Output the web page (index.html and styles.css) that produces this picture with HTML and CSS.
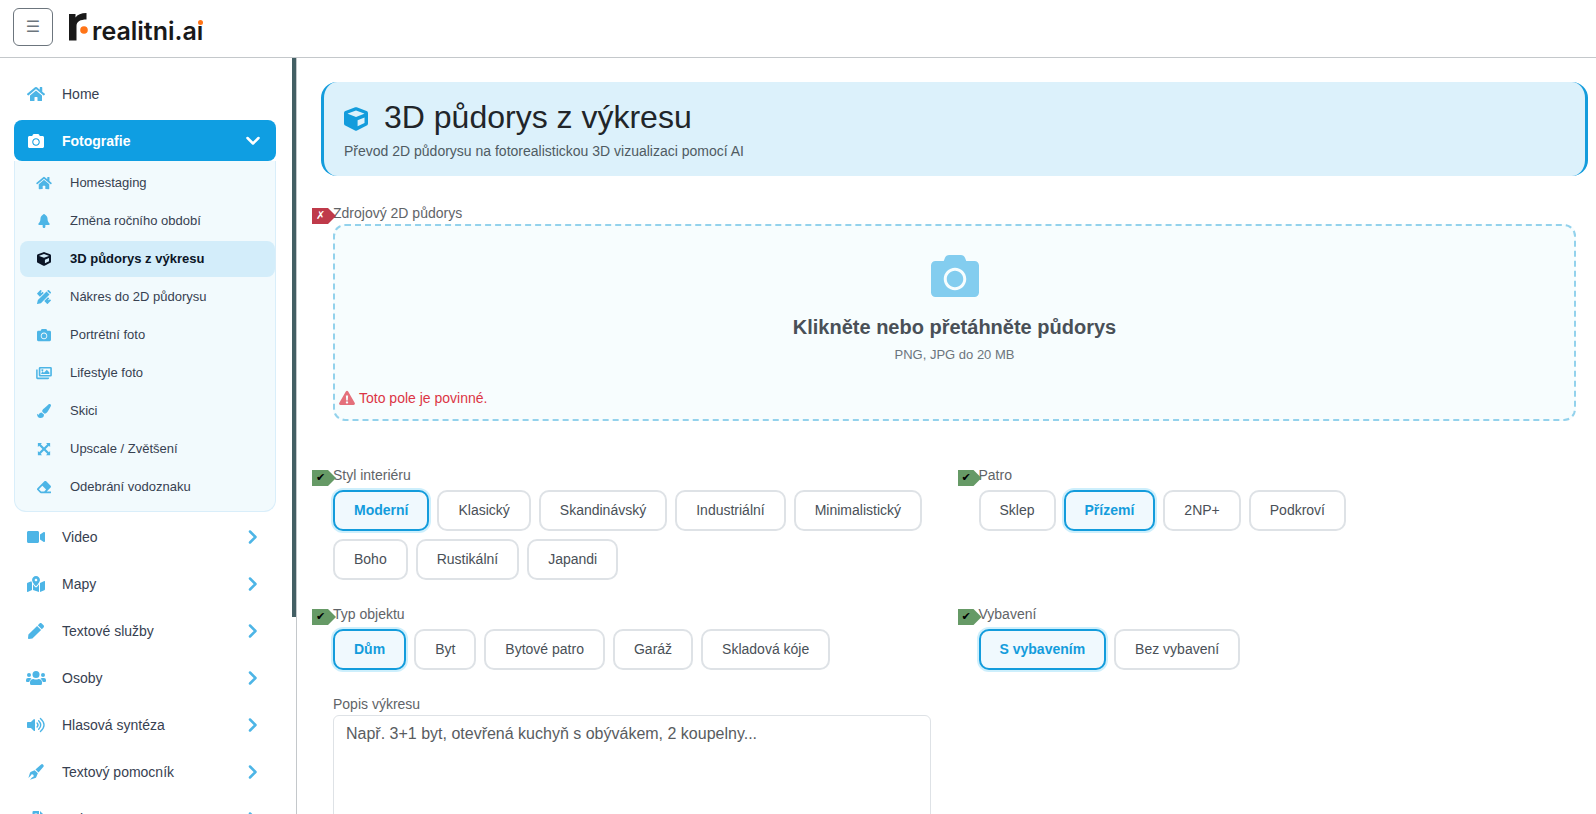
FILE: index.html
```html
<!DOCTYPE html>
<html lang="cs">
<head>
<meta charset="utf-8">
<meta name="viewport" content="width=device-width, initial-scale=1">
<title>3D půdorys z výkresu – realitni.ai</title>
<link rel="stylesheet" href="styles.css">
</head>
<body>
<svg class="sprite" aria-hidden="true">
  <symbol id="home" viewBox="0 0 576 512"><path d="M280.37 148.26L96 300.11V464a16 16 0 0 0 16 16l112.06-.29a16 16 0 0 0 15.92-16V368a16 16 0 0 1 16-16h64a16 16 0 0 1 16 16v95.64a16 16 0 0 0 16 16.05L464 480a16 16 0 0 0 16-16V300L295.67 148.26a12.19 12.19 0 0 0-15.3 0zM571.6 251.47L488 182.56V44.05a12 12 0 0 0-12-12h-56a12 12 0 0 0-12 12v72.61L318.47 43a48 48 0 0 0-61 0L4.34 251.47a12 12 0 0 0-1.6 16.9l25.5 31A12 12 0 0 0 45.15 301l235.22-193.74a12.19 12.19 0 0 1 15.3 0L530.9 301a12 12 0 0 0 16.9-1.6l25.5-31a12 12 0 0 0-1.7-16.93z"/></symbol>
  <symbol id="camera" viewBox="0 0 512 512"><path d="M512 144v288c0 26.500-21.500 48-48 48H48c-26.500 0-48-21.500-48-48V144c0-26.500 21.500-48 48-48h88l12.300-32.900c7-18.700 24.900-31.100 44.900-31.100h125.500c20 0 37.900 12.400 44.900 31.100L376 96h88c26.500 0 48 21.500 48 48zM376 288c0-66.200-53.800-120-120-120s-120 53.800-120 120 53.800 120 120 120 120-53.800 120-120zm-32 0c0 48.500-39.500 88-88 88s-88-39.500-88-88 39.500-88 88-88 88 39.500 88 88z"/></symbol>
  <symbol id="tree" viewBox="0 0 512 512"><path d="M256 0c18 0 28 8 42 24 50 34 76 74 84 120 8 54 4 90 24 130 10 26 28 50 50 76 16 22 4 50-22 50H306v64c0 60-100 60-100 0v-64H78c-26 0-38-28-22-50 22-26 40-50 50-76 20-40 16-76 24-130 8-46 34-86 84-120 14-16 24-24 42-24z"/></symbol>
  <symbol id="cube" viewBox="0 0 512 512"><path fill-rule="evenodd" d="M239.100 6.300l-208 78c-18.700 7-31.100 25-31.100 45v225.100c0 18.200 10.300 34.800 26.500 42.900l208 104c13.500 6.800 29.400 6.800 42.900 0l208-104c16.300-8.100 26.500-24.800 26.500-42.900V129.300c0-20-12.400-37.900-31.100-44.900l-208-78C262 2.200 250 2.200 239.100 6.300zM256 74l176 66v2l-176 70-176-70v-2zM290 410V282l148-60v120z"/></symbol>
  <symbol id="design" viewBox="0 0 512 512"><path d="M10 116 116 10q16-16 32 0l30 30-44 44 24 24 44-44 44 44-138 138L10 148q-16-16 0-32zM266 404l138-138 44 44-44 44 24 24 44-44 30 30q16 16 0 32L396 502q-16 16-32 0zM348 54l110 110L142 480 12 510q-14 2-10-12l30-130zM372 32l22-22q24-20 46 0l62 62q20 22 0 46l-22 22z"/></symbol>
  <symbol id="images" viewBox="0 0 576 512"><path fill-rule="evenodd" d="M144 32h384q48 0 48 48v256q0 48-48 48H144q-48 0-48-48V80q0-48 48-48zm12 56v240h360V88zM188 296v-44l52-52 46 46 104-106 96 96v60zM228 116a36 36 0 1 0 .1 0z"/><path d="M0 128h56v296h424v8q0 48-48 48H48q-48 0-48-48z"/></symbol>
  <symbol id="brush" viewBox="0 0 512 512"><path d="M167.020 309.340c-40.120 2.580-76.530 17.860-97.190 72.300-2.350 6.210-8 9.980-14.590 9.980-11.110 0-45.460-27.670-55.250-34.350C0 439.620 37.930 512 128 512c75.860 0 128-43.770 128-120.190 0-3.110-.65-6.080-.97-9.130l-88.010-73.340zM457.890 0c-15.160 0-29.370 6.710-40.210 16.450C213.270 199.050 192 203.340 192 257.090c0 13.700 3.250 26.760 8.730 38.700l63.820 53.180c7.210 1.800 14.640 3.030 22.390 3.030 62.110 0 98.110-45.470 211.160-256.460 7.380-14.350 13.900-29.850 13.900-45.990C512 20.640 486 0 457.890 0z"/></symbol>
  <symbol id="expand" viewBox="0 0 512 512"><path d="M32 32h150l-46 46 120 120L376 78l-46-46h150v150l-46-46-120 120 120 120 46-46v150H330l46-46-120-120-120 120 46 46H32V330l46 46 120-120L78 136l-46 46z"/></symbol>
  <symbol id="eraser" viewBox="0 0 512 512"><path d="M497.941 273.941c18.745-18.745 18.745-49.137 0-67.882l-160-160c-18.745-18.745-49.136-18.746-67.883 0l-256 256c-18.745 18.745-18.745 49.137 0 67.882l96 96A48.004 48.004 0 0 0 144 480h356c6.627 0 12-5.373 12-12v-40c0-6.627-5.373-12-12-12H355.883l142.058-142.059zm-302.627-62.627l137.373 137.373L265.373 416H150.628l-80-80 124.686-124.686z"/></symbol>
  <symbol id="video" viewBox="0 0 576 512"><path d="M336.200 64H47.800C21.400 64 0 85.400 0 111.800v288.400C0 426.600 21.400 448 47.800 448h288.400c26.400 0 47.800-21.400 47.800-47.800V111.800c0-26.400-21.400-47.800-47.800-47.800zm189.400 37.700L416 177.300v157.400l109.600 75.500c21.200 14.600 50.400-.3 50.400-25.800V127.500c0-25.400-29.100-40.400-50.400-25.800z"/></symbol>
  <symbol id="map" viewBox="0 0 576 512"><path d="M288 0c-69.590 0-126 56.410-126 126 0 56.260 82.350 158.800 113.900 196.020 6.390 7.540 17.820 7.540 24.200 0C331.650 284.800 414 182.260 414 126 414 56.410 357.590 0 288 0zm0 168c-23.200 0-42-18.800-42-42s18.800-42 42-42 42 18.800 42 42-18.800 42-42 42zM20.120 215.950A32.006 32.006 0 0 0 0 245.660v250.320c0 11.320 11.430 19.060 21.940 14.860L160 448V214.920c-8.840-15.980-16.070-31.540-21.250-46.420L20.120 215.950zM288 359.670c-14.070 0-27.380-6.180-36.510-16.960-19.660-23.200-40.570-49.620-59.490-76.720v182l192 64V266c-18.920 27.090-39.820 53.520-59.490 76.720-9.130 10.770-22.440 16.950-36.510 16.950zm266.060-198.510L416 224v288l139.880-55.950A31.996 31.996 0 0 0 576 426.340V176.020c0-11.320-11.430-19.060-21.940-14.860z"/></symbol>
  <symbol id="pen" viewBox="0 0 512 512"><path d="M290.740 93.240l128.020 128.020-277.990 277.990-114.140 12.600C11.350 513.540-1.560 500.620.14 485.340l12.700-114.220 277.900-277.880zm207.200-19.060l-60.110-60.110c-18.750-18.750-49.160-18.750-67.910 0l-56.550 56.550 128.020 128.020 56.550-56.550c18.750-18.760 18.750-49.160 0-67.910z"/></symbol>
  <symbol id="users" viewBox="0 0 640 512"><circle cx="96" cy="160" r="64"/><circle cx="544" cy="160" r="64"/><circle cx="320" cy="144" r="112"/><path d="M64 256h64q28 0 46 20-62 36-72 108H32q-32 0-32-32v-32q0-64 64-64zM512 256h64q64 0 64 64v32q0 32-32 32h-70q-10-72-72-108 18-20 46-20zM243 288q77 36 154 0 115 6 115 115v29q0 48-48 48H176q-48 0-48-48v-29q0-109 115-115z"/></symbol>
  <symbol id="volume" viewBox="0 0 576 512"><path d="M215 71 126 160H24q-24 0-24 24v144q0 24 24 24h102l89 89q16 14 41-1V88q-20-32-41-17z"/><path fill="none" stroke="currentColor" stroke-width="44" stroke-linecap="round" d="M322 190q62 66 0 132M374 118q130 138 0 276M430 48q230 208 0 416"/></symbol>
  <symbol id="nib" viewBox="0 0 512 512"><path d="M420 14q32-26 66 6 34 36 8 68L336 274l-98-98zM214 196l102 102-50 118q-10 24-36 32L62 500l72-74a48 48 0 1 0-48-48L12 450 64 282q8-26 32-36z"/></symbol>
  <symbol id="doc" viewBox="0 0 448 512"><path d="M144 0h176v128h128v256q0 32-32 32H144q-32 0-32-32V32q0-32 32-32zm36 80v210h200V190H260V80zM0 96h64v352h272v32q0 32-32 32H32q-32 0-32-32zM352 0l96 96h-96z" fill-rule="evenodd"/></symbol>
  <symbol id="warn" viewBox="0 0 576 512"><path fill-rule="evenodd" d="M246 24q42-50 84 0l238 416q22 56-42 72H50q-64-16-42-72zM248 164l12 186h56l12-186zM288 370a42 42 0 1 0 .1 0z"/></symbol>
  <symbol id="chevron" viewBox="0 0 14 14"><path fill="none" stroke="currentColor" stroke-width="2.500" stroke-linecap="round" stroke-linejoin="round" d="M4 1.500 9.500 7 4 12.500"/></symbol>
</svg>

<header class="topbar">
  <button class="menu-button" type="button" aria-label="Menu">☰</button>
  <a class="logo" href="#" aria-label="realitni.ai">
    <svg class="logo-mark" viewBox="0 0 19 28" aria-hidden="true"><path fill="#191919" d="M0 1h6.500v3.500C8.500 1.500 12 0 17.500 0v6.500C11.500 6.500 7.500 8.500 7.500 13v14.500H0z"/><circle cx="15" cy="17" r="3.800" fill="#ff7417"/></svg>
    <span class="logo-text">realitni.a<span class="logo-i">ı</span></span>
  </a>
</header>

<div class="layout">
  <aside class="sidebar">
    <nav class="nav" aria-label="Hlavní nabídka">
      <a class="nav-item" href="#"><svg class="nav-icon"><use href="#home"/></svg><span>Home</span></a>
      <div class="nav-group">
        <button class="nav-item nav-open" type="button" aria-expanded="true"><svg class="nav-icon"><use href="#camera"/></svg><span>Fotografie</span><svg class="arrow arrow-down"><use href="#chevron"/></svg></button>
        <div class="subnav">
          <a class="sub-item" href="#"><svg class="sub-icon"><use href="#home"/></svg>Homestaging</a>
          <a class="sub-item" href="#"><svg class="sub-icon"><use href="#tree"/></svg>Změna ročního období</a>
          <a class="sub-item active" href="#" aria-current="page"><svg class="sub-icon"><use href="#cube"/></svg>3D půdorys z výkresu</a>
          <a class="sub-item" href="#"><svg class="sub-icon"><use href="#design"/></svg>Nákres do 2D půdorysu</a>
          <a class="sub-item" href="#"><svg class="sub-icon"><use href="#camera"/></svg>Portrétní foto</a>
          <a class="sub-item" href="#"><svg class="sub-icon"><use href="#images"/></svg>Lifestyle foto</a>
          <a class="sub-item" href="#"><svg class="sub-icon"><use href="#brush"/></svg>Skici</a>
          <a class="sub-item" href="#"><svg class="sub-icon"><use href="#expand"/></svg>Upscale / Zvětšení</a>
          <a class="sub-item" href="#"><svg class="sub-icon"><use href="#eraser"/></svg>Odebrání vodoznaku</a>
        </div>
      </div>
      <button class="nav-item" type="button"><svg class="nav-icon"><use href="#video"/></svg><span>Video</span><svg class="arrow"><use href="#chevron"/></svg></button>
      <button class="nav-item" type="button"><svg class="nav-icon"><use href="#map"/></svg><span>Mapy</span><svg class="arrow"><use href="#chevron"/></svg></button>
      <button class="nav-item" type="button"><svg class="nav-icon"><use href="#pen"/></svg><span>Textové služby</span><svg class="arrow"><use href="#chevron"/></svg></button>
      <button class="nav-item" type="button"><svg class="nav-icon"><use href="#users"/></svg><span>Osoby</span><svg class="arrow"><use href="#chevron"/></svg></button>
      <button class="nav-item" type="button"><svg class="nav-icon"><use href="#volume"/></svg><span>Hlasová syntéza</span><svg class="arrow"><use href="#chevron"/></svg></button>
      <button class="nav-item" type="button"><svg class="nav-icon"><use href="#nib"/></svg><span>Textový pomocník</span><svg class="arrow"><use href="#chevron"/></svg></button>
      <button class="nav-item" type="button"><svg class="nav-icon"><use href="#doc"/></svg><span>Dokumenty</span><svg class="arrow"><use href="#chevron"/></svg></button>
    </nav>
    <div class="scroll-thumb"></div>
  </aside>

  <main class="main">
    <section class="page-head">
      <h1 class="page-title"><svg class="title-icon" aria-hidden="true"><use href="#cube"/></svg>3D půdorys z výkresu</h1>
      <p class="page-sub">Převod 2D půdorysu na fotorealistickou 3D vizualizaci pomocí AI</p>
    </section>

    <form class="form">
      <div class="field wide">
        <label class="label" for="plan"><span class="flag flag-bad">✗</span>Zdrojový 2D půdorys</label>
        <label class="dropzone" for="plan">
          <svg class="drop-icon" aria-hidden="true"><use href="#camera"/></svg>
          <strong class="drop-title">Klikněte nebo přetáhněte půdorys</strong>
          <span class="drop-sub">PNG, JPG do 20 MB</span>
          <span class="error"><svg class="error-icon" aria-hidden="true"><use href="#warn"/></svg>Toto pole je povinné.</span>
        </label>
        <input class="hidden-input" type="file" id="plan">
      </div>

      <div class="field" role="radiogroup" aria-labelledby="l-style">
        <div class="label" id="l-style"><span class="flag">✔</span>Styl interiéru</div>
        <div class="chips">
          <label class="chip"><input class="hidden-input" type="radio" name="style" checked>Moderní</label>
          <label class="chip"><input class="hidden-input" type="radio" name="style">Klasický</label>
          <label class="chip"><input class="hidden-input" type="radio" name="style">Skandinávský</label>
          <label class="chip"><input class="hidden-input" type="radio" name="style">Industriální</label>
          <label class="chip"><input class="hidden-input" type="radio" name="style">Minimalistický</label>
          <label class="chip"><input class="hidden-input" type="radio" name="style">Boho</label>
          <label class="chip"><input class="hidden-input" type="radio" name="style">Rustikální</label>
          <label class="chip"><input class="hidden-input" type="radio" name="style">Japandi</label>
        </div>
      </div>

      <div class="field" role="radiogroup" aria-labelledby="l-floor">
        <div class="label" id="l-floor"><span class="flag">✔</span>Patro</div>
        <div class="chips">
          <label class="chip"><input class="hidden-input" type="radio" name="floor">Sklep</label>
          <label class="chip"><input class="hidden-input" type="radio" name="floor" checked>Přízemí</label>
          <label class="chip"><input class="hidden-input" type="radio" name="floor">2NP+</label>
          <label class="chip"><input class="hidden-input" type="radio" name="floor">Podkroví</label>
        </div>
      </div>

      <div class="field" role="radiogroup" aria-labelledby="l-type">
        <div class="label" id="l-type"><span class="flag">✔</span>Typ objektu</div>
        <div class="chips">
          <label class="chip"><input class="hidden-input" type="radio" name="type" checked>Dům</label>
          <label class="chip"><input class="hidden-input" type="radio" name="type">Byt</label>
          <label class="chip"><input class="hidden-input" type="radio" name="type">Bytové patro</label>
          <label class="chip"><input class="hidden-input" type="radio" name="type">Garáž</label>
          <label class="chip"><input class="hidden-input" type="radio" name="type">Skladová kóje</label>
        </div>
      </div>

      <div class="field" role="radiogroup" aria-labelledby="l-equip">
        <div class="label" id="l-equip"><span class="flag">✔</span>Vybavení</div>
        <div class="chips">
          <label class="chip"><input class="hidden-input" type="radio" name="equip" checked>S vybavením</label>
          <label class="chip"><input class="hidden-input" type="radio" name="equip">Bez vybavení</label>
        </div>
      </div>

      <div class="field">
        <label class="label" for="desc">Popis výkresu</label>
        <textarea class="textarea" id="desc" rows="5" placeholder="Např. 3+1 byt, otevřená kuchyň s obývákem, 2 koupelny..."></textarea>
      </div>
    </form>
  </main>
</div>
</body>
</html>
```

FILE: styles.css
```css
* { box-sizing: border-box; }

body {
  margin: 0;
  height: 100vh;
  display: flex;
  flex-direction: column;
  overflow: hidden;
  background: #fff;
  color: #212529;
  font-family: "Liberation Sans", Arial, sans-serif;
  font-size: 14px;
  line-height: 20px;
}

svg { fill: currentColor; flex: none; }
button { font: inherit; cursor: pointer; }
a { color: inherit; text-decoration: none; }

.sprite { display: none; }

/* Top bar */
.topbar {
  display: flex;
  align-items: center;
  gap: 16px;
  flex: none;
  padding: 8px 13px 11px;
  border-bottom: 1px solid #c4c8cb;
}

.menu-button {
  width: 40px;
  height: 38px;
  padding: 0;
  border: 1px solid #6c757d;
  border-radius: 6px;
  background: #fff;
  color: #6c757d;
  font-family: "DejaVu Sans", sans-serif;
  font-size: 16px;
}

.logo { display: flex; align-items: flex-end; gap: 4px; }
.logo-mark { width: 19px; height: 28px; }

.logo-text {
  color: #191919;
  font-family: Inter, sans-serif;
  font-size: 25px;
  font-weight: 600;
  line-height: 20px;
}

.logo-i { position: relative; }

.logo-i::after {
  content: "";
  position: absolute;
  left: 1px;
  top: 4px;
  width: 5px;
  height: 5px;
  border-radius: 50%;
  background: #ff7417;
}

.layout { flex: 1; min-height: 0; display: flex; }

/* Sidebar */
.sidebar {
  position: relative;
  flex: none;
  width: 297px;
  overflow: hidden;
  border-right: 1px solid #c4c8cb;
}

.scroll-thumb {
  position: absolute;
  top: 0;
  right: 0;
  width: 4px;
  height: 74%;
  background: #435f64;
}

.nav {
  display: flex;
  flex-direction: column;
  gap: 6px;
  padding: 15px 20px 15px 14px;
}

.nav-group { margin-bottom: -2px; }

.nav-item {
  display: flex;
  align-items: center;
  gap: 16px;
  width: 100%;
  height: 41px;
  padding: 0 16px 0 12px;
  border: 0;
  border-radius: 8px;
  background: none;
  color: #374151;
  text-align: left;
}

.nav-icon { width: 20px; height: 16px; color: #4db5e6; }
.arrow { width: 14px; height: 14px; margin-left: auto; color: #4db5e6; }
.arrow-down { transform: rotate(90deg); }

.nav-open { background: #0f9ee2; color: #fff; font-weight: 700; }
.nav-open .nav-icon, .nav-open .arrow { color: #fff; }

.subnav {
  display: flex;
  flex-direction: column;
  gap: 2px;
  padding: 4px 0 6px 5px;
  border: 1px solid #d9eefa;
  border-top: 0;
  border-radius: 0 0 12px 12px;
  background: #f2fafd;
}

.sub-item {
  display: flex;
  align-items: center;
  gap: 18px;
  height: 36px;
  padding: 0 16px;
  border-radius: 8px;
  color: #374151;
  font-size: 13px;
}

.sub-icon { width: 16px; height: 14px; color: #4db5e6; }
.active { background: #d3edfa; color: #0b1526; font-weight: 700; }
.active .sub-icon { color: #0b1526; }

/* Main column */
.main {
  flex: 1;
  min-width: 0;
  overflow: hidden;
  padding: 24px 8px 0 24px;
}

.page-head {
  padding: 15px 20px;
  border: 0 solid #139cdc;
  border-width: 0 3px;
  border-radius: 16px;
  background: #dcf1fb;
}

.page-title {
  display: flex;
  align-items: center;
  gap: 16px;
  margin: 0 0 4px;
  font-size: 32px;
  font-weight: 400;
  line-height: 40px;
}

.title-icon { width: 24px; height: 24px; margin-top: 3px; color: #139cdc; }
.page-sub { margin: 0; color: #4f5b62; }

/* Form */
.form {
  display: grid;
  grid-template-columns: 1fr 1fr;
  gap: 24px 48px;
  padding: 27px 12px 0;
}

.field { min-width: 0; }
.wide { grid-column: 1 / -1; margin-bottom: 20px; }

.label {
  position: relative;
  display: block;
  color: #5f6468;
}

.flag {
  position: absolute;
  top: 5px;
  left: -21px;
  width: 24px;
  height: 16px;
  padding-left: 4px;
  background: #669a66;
  clip-path: polygon(0 0, 16px 0, 100% 50%, 16px 100%, 0 100%);
  color: #000;
  font-family: "DejaVu Sans", sans-serif;
  font-size: 11px;
  line-height: 16px;
}

.flag-bad { background: #bf3a4a; color: #fff; }

.hidden-input {
  position: absolute;
  width: 1px;
  height: 1px;
  opacity: 0;
  pointer-events: none;
}

.dropzone {
  display: flex;
  flex-direction: column;
  align-items: center;
  margin-top: 1px;
  padding: 26px 4px 11px;
  border: 2px dashed #93d2ec;
  border-radius: 12px;
  background: #f7fdfe;
  cursor: pointer;
}

.drop-icon { width: 48px; height: 48px; color: #83cdef; }

.drop-title {
  margin: 15px 0 6px;
  color: #495057;
  font-size: 20px;
  line-height: 24px;
}

.drop-sub { color: #6c757d; font-size: 13px; }

.error {
  display: flex;
  align-items: center;
  align-self: flex-start;
  gap: 4px;
  margin-top: 23px;
  color: #dc3545;
}

.error-icon { width: 16px; height: 16px; opacity: 0.7; }

.chips {
  display: flex;
  flex-wrap: wrap;
  gap: 8px;
  margin-top: 5px;
}

.chip {
  position: relative;
  padding: 8px 19px;
  border: 2px solid #dee2e6;
  border-radius: 10px;
  background: #fff;
  color: #495057;
  line-height: 21px;
  cursor: pointer;
}

.chip:has(input:checked) {
  border-color: #139cdc;
  background: #f0f9fe;
  box-shadow: 0 0 0 2px #cdeffc;
  color: #139cdc;
  font-weight: 700;
}

.textarea {
  display: block;
  width: 100%;
  margin-top: 1px;
  padding: 6px 12px;
  border: 1px solid #dee2e6;
  border-radius: 6px;
  font: inherit;
  font-size: 16px;
  line-height: 24px;
  resize: none;
}

.textarea::placeholder { color: #595c5f; opacity: 1; }
```
